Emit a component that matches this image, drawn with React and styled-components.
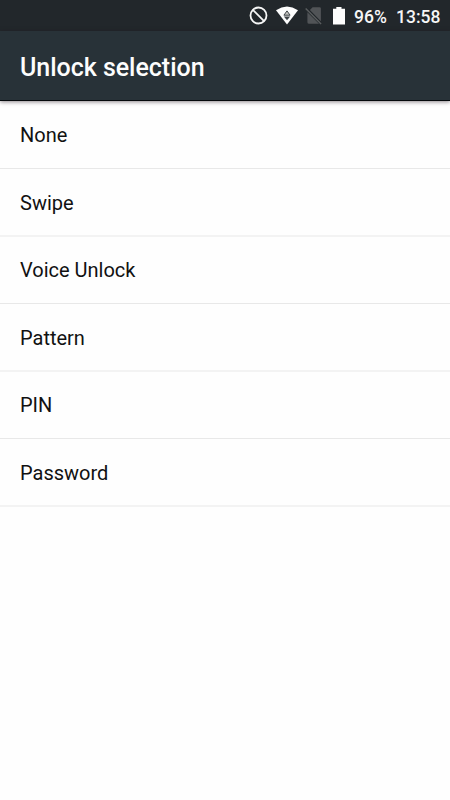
import React from "react";
import styled, { createGlobalStyle } from "styled-components";

const GlobalStyle = createGlobalStyle`
  * {
    box-sizing: border-box;
  }
  body {
    margin: 0;
    background: #fefefe;
    font-family: Roboto, "Liberation Sans", sans-serif;
  }
`;

const Screen = styled.div`
  width: 450px;
  height: 800px;
  background: #fefefe;
  overflow: hidden;
`;

const StatusBar = styled.div`
  height: 31px;
  padding: 1px 10px 0 0;
  background: #22272b;
  color: #f6f6f6;
  display: flex;
  justify-content: flex-end;
  align-items: center;
  svg {
    display: block;
    flex: none;
  }
`;

const StatusText = styled.span`
  width: ${(props) => props.$width}px;
  margin-left: ${(props) => props.$gap}px;
  padding-top: 2px;
  font-size: 17.5px;
  font-weight: 500;
  line-height: 28px;
  white-space: nowrap;
`;

const Header = styled.header`
  height: 70px;
  padding: 5px 20px 0;
  background: #283238;
  border-bottom: 1px solid #05090c;
  box-shadow: 0 1px 4px rgba(30, 15, 25, 0.5);
  position: relative;
  display: flex;
  align-items: center;
`;

const Title = styled.h1`
  margin: 0;
  color: #fdfdfd;
  font-size: 25px;
  font-weight: 500;
  line-height: 30px;
  letter-spacing: -0.03px;
`;

const OptionList = styled.ul`
  margin: 0;
  padding: 0;
  list-style: none;
`;

const Option = styled.li`
  height: ${(props) => (props.$first || props.$thick ? 68 : 67)}px;
  padding: ${(props) => (props.$first || props.$thick ? 21 : 20)}px 20px 0;
  border-bottom: ${(props) =>
    props.$thick ? "2px solid #f3f3f3" : "1px solid #e8e8e8"};
  color: #111;
  font-size: 20px;
  line-height: 26px;
`;

const options = ["None", "Swipe", "Voice Unlock", "Pattern", "PIN", "Password"];

function StatusIcons() {
  return (
    <svg width="97" height="30" viewBox="249 1 97 30">
      <g fill="none" stroke="#f6f6f6" strokeWidth="1.8">
        <circle cx="258.5" cy="15.5" r="8" />
        <path d="M252.9 9.9l11.2 11.2" />
      </g>
      <path d="M276 10.2Q287 3 298 10.2L287 24.6Z" fill="#fdfdfd" />
      <path
        d="M283.9 15.2h6.2L287 10.9z"
        fill="#c4c4c0"
        stroke="#3d4347"
        strokeWidth="1"
      />
      <path d="M283.8 16.6h6.4L287 20.2z" fill="#3d4347" />
      <path
        d="M312.6 7.2h6.9q1.4 0 1.4 1.4v12.6L309.9 10zM307.4 12.2L319 23.8h-9.9q-1.7 0-1.7-1.6z"
        fill="#515457"
      />
      <path d="M305.7 8.6l15.4 15.3" stroke="#5b5e60" strokeWidth="1.4" />
      <path d="M336.3 7h5.2v1.8h3.5v15.7h-12V8.8h3.3z" fill="#fdfdfd" />
    </svg>
  );
}

export default function App() {
  return (
    <Screen>
      <GlobalStyle />
      <StatusBar>
        <StatusIcons />
        <StatusText $width={33} $gap={8}>
          96%
        </StatusText>
        <StatusText $width={44} $gap={9}>
          13:58
        </StatusText>
      </StatusBar>
      <Header>
        <Title>Unlock selection</Title>
      </Header>
      <OptionList>
        {options.map((option, index) => (
          <Option key={option} $first={index === 0} $thick={index % 2 === 1}>
            {option}
          </Option>
        ))}
      </OptionList>
    </Screen>
  );
}
